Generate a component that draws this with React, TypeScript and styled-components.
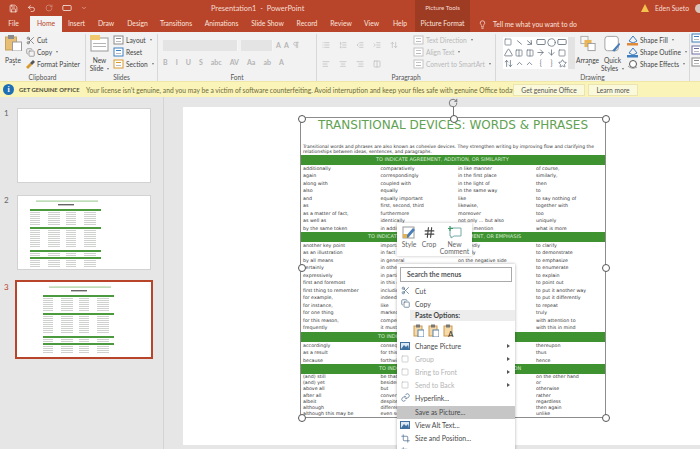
import React from "react";
import styled, { createGlobalStyle } from "styled-components";
import {
  AlignCenter, AlignLeft, AlignRight, ArrowDown, ArrowRight, ChevronDown, ChevronUp, Circle, Copy, IndentDecrease,
  IndentIncrease, Lightbulb, List, ListOrdered, Minus, Pilcrow, RectangleHorizontal, RotateCw, Save, Scissors, Square, Star,
  Triangle, Undo2, Columns2, ArrowUpDown, Link, Crop, Hash,
} from "lucide-react";

const UI = `"Lato", "Noto Sans", sans-serif`;
const RED = "#b8452a";
const DARK = "#9d3b23";

const Global = createGlobalStyle`
  html, body { margin: 0; padding: 0; background: #e6e6e6; }
  body { font-family: ${UI}; }
  #root { width: 700px; height: 449px; overflow: hidden; }
`;

const Page = styled.div`
  width: 700px;
  height: 449px;
  display: flex;
  flex-direction: column;
  overflow: hidden;
`;

/* title bar */
const TitleRow = styled.header`
  height: 16px;
  background: ${RED};
  display: flex;
  align-items: center;
  color: #f6dcd3;
  font-size: 7.4px;
`;
const Qat = styled.div`
  width: 211px;
  display: flex;
  align-items: center;
  gap: 9px;
  padding-left: 9px;
  box-sizing: border-box;
  color: #f7e5df;
`;
const DocTitle = styled.div`
  width: 204px;
  white-space: pre;
`;
const ToolsTag = styled.div`
  width: 55px;
  height: 100%;
  background: ${DARK};
  text-align: center;
  line-height: 16px;
  font-size: 6.2px;
`;
const User = styled.div`
  margin-left: auto;
  display: flex;
  align-items: center;
  gap: 6px;
  font-size: 6.8px;
`;
const Avatar = styled.span`
  width: 9px;
  height: 9px;
  border-radius: 50%;
  background: #d9c4bb;
  margin-right: -4px;
`;

/* tabs */
const TabRow = styled.nav`
  height: 16px;
  background: ${RED};
  display: flex;
  align-items: stretch;
  color: #f8e3dc;
  font-size: 6.8px;
`;
const Tab = styled.div<{ $w: number; $active?: boolean; $tool?: boolean }>`
  width: ${(p) => p.$w}px;
  text-align: center;
  line-height: 15px;
  white-space: nowrap;
  background: ${(p) => (p.$active ? "#f3f3f3" : p.$tool ? DARK : "transparent")};
  color: ${(p) => (p.$active ? RED : "inherit")};
`;
const TellMe = styled.div`
  display: flex;
  align-items: center;
  gap: 6px;
  margin-left: 8px;
`;

/* ribbon */
const Ribbon = styled.section`
  height: 49px;
  background: #f2f2f2;
  display: flex;
  color: #444;
  font-size: 6.6px;
`;
const Group = styled.div<{ $w: number }>`
  width: ${(p) => p.$w}px;
  flex: none;
  box-sizing: border-box;
  display: flex;
  flex-direction: column;
  border-right: 1px solid #d8d8d8;
  margin: 2px 0 0;
`;
const GroupBody = styled.div`
  flex: 1;
  display: flex;
  min-height: 0;
`;
const GroupLabel = styled.div`
  height: 8px;
  line-height: 8px;
  text-align: center;
  font-size: 6.6px;
  color: #555;
`;
const BigButton = styled.div<{ $w: number }>`
  width: ${(p) => p.$w}px;
  flex: none;
  display: flex;
  flex-direction: column;
  align-items: center;
  line-height: 8px;
  white-space: nowrap;
  padding-top: 1px;
  box-sizing: border-box;
`;
const BigIcon = styled.span`
  height: 19px;
  display: flex;
  align-items: flex-start;
  margin-bottom: 2px;
`;
const SmallStack = styled.div<{ $pad?: number }>`
  display: flex;
  flex-direction: column;
  justify-content: flex-start;
  padding-left: ${(p) => p.$pad ?? 0}px;
`;
const SmallButton = styled.div<{ $off?: boolean }>`
  height: 12.2px;
  display: flex;
  align-items: center;
  gap: 2px;
  white-space: nowrap;
  color: ${(p) => (p.$off ? "#b9b9b9" : "#444")};
`;
const Caret = styled.span`
  width: 0;
  height: 0;
  margin-left: 2px;
  border-left: 1.5px solid transparent;
  border-right: 1.5px solid transparent;
  border-top: 2px solid #777;
  display: inline-block;
  vertical-align: middle;
`;
const FontBox = styled.div`
  display: flex;
  flex-direction: column;
  gap: 5px;
  padding: 5px 0 0 5px;
  color: #b4b4b4;
`;
const FontRow = styled.div<{ $gap?: number }>`
  display: flex;
  align-items: center;
  gap: ${(p) => p.$gap ?? 6}px;
  height: 12px;
  font-size: 7px;
  font-weight: 700;
`;
const Combo = styled.div<{ $w: number }>`
  width: ${(p) => p.$w}px;
  height: 11px;
  background: #e4e4e4;
  border-right: 1px solid #f6f6f6;
`;
const ParaBox = styled.div`
  width: 96px;
  flex: none;
  display: flex;
  flex-direction: column;
  gap: 7px;
  padding: 5px 0 0 5px;
  box-sizing: border-box;
  color: #b9b9b9;
`;
const Gallery = styled.div`
  width: 72px;
  height: 32px;
  box-sizing: border-box;
  margin: 3px 0 0 7px;
  background: #fff;
  border-right: 7px solid #e3e3e3;
  flex: none;
  display: grid;
  grid-template-columns: repeat(6, 10.8px);
  grid-auto-rows: 10.6px;
  place-items: center;
  color: #5f6b77;
`;

/* notice */
const Notice = styled.aside`
  height: 16px;
  background: #faf4b8;
  border-top: 1px solid #eee7a8;
  box-sizing: border-box;
  display: flex;
  align-items: center;
  font-size: 6.7px;
  color: #6d6a3a;
  white-space: nowrap;
`;
const InfoDot = styled.span`
  width: 11px;
  height: 11px;
  border-radius: 50%;
  background: #1f6fb5;
  color: #fff;
  font: bold 8px/11px "Liberation Serif", serif;
  text-align: center;
  margin: 0 5px 0 3px;
  flex: none;
`;
const NoticeHead = styled.b`
  color: #4d4d38;
  width: 67px;
  flex: none;
  font-weight: 700;
  font-size: 5.9px;
`;
const NoticeBody = styled.span`
  width: 427px;
  flex: none;
`;
const NoticeButton = styled.span<{ $w: number }>`
  width: ${(p) => p.$w}px;
  height: 12px;
  line-height: 11px;
  margin-right: 3px;
  text-align: center;
  background: #fbf9dc;
  border: 1px solid #e9e4b0;
  box-sizing: border-box;
  color: #555;
`;

/* workspace */
const Workspace = styled.main`
  flex: 1;
  min-height: 0;
  position: relative;
  display: flex;
`;
const ThumbPane = styled.div`
  width: 164px;
  flex: none;
  box-sizing: border-box;
  border-right: 1px solid #d4d4d4;
  padding-top: 11px;
  display: flex;
  flex-direction: column;
  gap: 12px;
  background: #e6e6e6;
`;
const ThumbRow = styled.div<{ $current?: boolean }>`
  display: flex;
  align-items: flex-start;
  font-size: 8px;
  color: ${(p) => (p.$current ? RED : "#666")};
`;
const ThumbNum = styled.span`
  width: 17px;
  padding-left: 4px;
  box-sizing: border-box;
  flex: none;
`;
const Thumb = styled.div<{ $current?: boolean }>`
  width: 134px;
  height: 75px;
  background: #fff;
  box-sizing: border-box;
  border: 1px solid ${(p) => (p.$current ? "#fff" : "#d2d2d2")};
  ${(p) => p.$current && `outline: 2px solid ${RED};`}
  display: flex;
`;
const Canvas = styled.div`
  flex: 1;
  padding: 10px 0 4px 19px;
  display: flex;
  background: #e6e6e6;
  min-width: 0;
`;
const Slide = styled.div`
  flex: 1;
  background: #fff;
  padding: 10px 0 0 117px;
  position: relative;
`;
const Picture = styled.div`
  width: 306px;
  height: 301px;
  box-sizing: border-box;
  border: 1px solid #8c8c8c;
  position: relative;
  color: #333;
  font-family: "DejaVu Sans", sans-serif;
  font-size: 4.75px;
`;
const Handle = styled.span<{ $x: number; $y: number }>`
  position: absolute;
  left: ${(p) => p.$x}%;
  top: ${(p) => p.$y}%;
  width: 6px;
  height: 6px;
  margin: -3.5px 0 0 -3.5px;
  border: 1px solid #555;
  border-radius: 50%;
  background: #fff;
  z-index: 1;
`;
const RotateStem = styled.span`
  position: absolute;
  left: 50%;
  top: -11px;
  width: 1px;
  height: 11px;
  background: #777;
`;
const RotateIcon = styled.span`
  position: absolute;
  left: 50%;
  top: -20px;
  margin-left: -5px;
  color: #666;
  display: flex;
`;
const DocTitleText = styled.h1`
  margin: 0;
  height: 26px;
  text-align: center;
  font: 400 12px/14px "DejaVu Sans", sans-serif;
  color: #5fa252;
  white-space: nowrap;
`;
const Intro = styled.p`
  margin: 0;
  height: 11px;
  padding: 0 2px;
  font-size: 4.5px;
  line-height: 5px;
  white-space: nowrap;
`;
const Band = styled.div<{ $indent: number }>`
  height: 10px;
  background: #3e9230;
  color: #d7ecd2;
  font-size: 5px;
  line-height: 9.5px;
  padding-left: ${(p) => p.$indent}px;
  white-space: nowrap;
  overflow: hidden;
`;
const Rows = styled.div<{ $h: number }>`
  display: grid;
  grid-template-columns: 77.5px 77.5px 78px 1fr;
  grid-auto-rows: ${(p) => p.$h}px;
  line-height: ${(p) => p.$h}px;
  padding-left: 2px;
  white-space: nowrap;
`;

/* floating mini toolbar and menu */
const MiniBar = styled.div`
  position: absolute;
  left: 397px;
  top: 126px;
  width: 75px;
  height: 33px;
  background: #fff;
  box-shadow: 0 0 3px rgba(0, 0, 0, 0.25);
  display: flex;
  font-size: 6.8px;
  color: #666;
  z-index: 3;
`;
const MiniTool = styled.div<{ $w: number }>`
  width: ${(p) => p.$w}px;
  display: flex;
  flex-direction: column;
  align-items: center;
  line-height: 7px;
  padding-top: 3px;
  gap: 2px;
  text-align: center;
`;
const Menu = styled.div`
  position: absolute;
  left: 397px;
  top: 167px;
  width: 118px;
  height: 200px;
  background: #fff;
  box-shadow: 0 0 3px rgba(0, 0, 0, 0.3);
  z-index: 3;
  font-size: 6.9px;
  color: #444;
`;
const MenuSearch = styled.div`
  margin: 3px 3px 2px;
  height: 15px;
  border: 1px solid #aaa;
  box-sizing: border-box;
  padding-left: 6px;
  line-height: 13px;
  font-weight: 700;
  color: #555;
`;
const MenuItem = styled.div<{ $off?: boolean; $hot?: boolean }>`
  height: 13px;
  display: flex;
  align-items: center;
  gap: 5px;
  padding-left: 3px;
  white-space: nowrap;
  color: ${(p) => (p.$off ? "#b5b5b5" : "#4a4a4a")};
  background: ${(p) => (p.$hot ? "#c6c6c6" : "transparent")};
  margin-top: ${(p) => (p.$hot ? 1.5 : 0)}px;
`;
const MenuIcon = styled.span`
  width: 10px;
  display: flex;
  justify-content: center;
  color: #53718f;
  flex: none;
`;
const MenuHead = styled.div`
  margin: 0 0 0 13px;
  height: 11px;
  line-height: 11px;
  padding-left: 5px;
  font-weight: 700;
  background: #ededed;
`;
const PasteRow = styled.div`
  height: 17px;
  margin-top: 1px;
  display: flex;
  align-items: center;
  gap: 4px;
  padding-left: 16px;
`;
const Arrow = styled.span`
  margin-left: auto;
  margin-right: 5px;
  width: 0;
  height: 0;
  border-top: 2px solid transparent;
  border-bottom: 2px solid transparent;
  border-left: 3px solid #555;
`;

/* drawn icons */
const PasteIcon = () => (
  <svg width="17" height="16" viewBox="0 0 17 16">
    <rect x="0.5" y="2" width="11" height="13" fill="#e8bd74" stroke="#c79f5f" />
    <rect x="3" y="0" width="6" height="4" fill="#8b8b8b" />
    <rect x="7.5" y="7" width="9" height="9" fill="#fff" stroke="#9a9a9a" />
  </svg>
);
const NewSlideIcon = () => (
  <svg width="19" height="17" viewBox="0 0 19 17">
    <rect x="1" y="3" width="17" height="13" fill="#fff" stroke="#999" />
    <rect x="3" y="8" width="13" height="1" fill="#b5b5b5" />
    <rect x="3" y="11" width="13" height="1" fill="#b5b5b5" />
    <rect x="0" y="0" width="10" height="5" fill="#f0c96f" />
  </svg>
);
const TinySlide = ({ tone }: { tone: string }) => (
  <svg width="11" height="10" viewBox="0 0 11 10">
    <rect x="1" y="1" width="9" height="8" fill="#fff" stroke={tone} />
    <rect x="3" y="3" width="5" height="1" fill={tone} />
    <rect x="3" y="6" width="5" height="1" fill="#bbb" />
  </svg>
);
const Painter = () => (
  <svg width="9" height="9" viewBox="0 0 9 9">
    <path d="M0 7 L4 3 L6 5 L2 9 Z" fill="#d89a2e" />
    <path d="M4 3 L7 0 L9 2 L6 5 Z" fill="#555" />
  </svg>
);
const ArrangeIcon = () => (
  <svg width="16" height="17" viewBox="0 0 18 18">
    <rect x="1" y="1" width="8" height="8" fill="#f6f6f6" stroke="#aaa" />
    <rect x="5" y="5" width="8" height="8" fill="#eab557" />
    <rect x="9" y="9" width="8" height="8" fill="#fff" stroke="#999" />
  </svg>
);
const QuickIcon = () => (
  <svg width="17" height="18" viewBox="0 0 19 19">
    <rect x="1" y="1" width="15" height="16" rx="3" fill="#fff" stroke="#999" />
    <path d="M9 17 L17 8 L18 10 L12 18 Z" fill="#4a7eb8" />
  </svg>
);
const FillIcon = ({ bar, tone }: { bar: string; tone: string }) => (
  <svg width="11" height="11" viewBox="0 0 11 11">
    <path d="M2 6 L6 1 L10 6 L6 8 Z" fill="none" stroke={tone} />
    <rect x="0" y="8" width="11" height="2.5" fill={bar} />
  </svg>
);
const EffectIcon = () => (
  <svg width="11" height="11" viewBox="0 0 11 11">
    <circle cx="6" cy="5" r="3.5" fill="#fff" stroke="#555" />
    <path d="M1 7 Q5 11 10 8" fill="none" stroke="#999" />
  </svg>
);
const ClipIcon = ({ tone, mark, letter }: { tone: string; mark: string; letter?: string }) => (
  <svg width="11" height="13" viewBox="0 0 11 13">
    <rect x="1" y="2" width="8" height="10" fill="#f5d9a8" stroke={tone} />
    <rect x="3" y="0.5" width="4" height="3" fill="#777" />
    {letter ? (
      <text x="5" y="12.5" fontSize="8" fontFamily="Lato" fill="#333">{letter}</text>
    ) : (
      <rect x="5" y="6" width="6" height="7" fill="#fff" stroke={mark} />
    )}
  </svg>
);
const PictureIcon = () => (
  <svg width="10" height="10" viewBox="0 0 10 10">
    <rect x="0.5" y="1.5" width="9" height="7" fill="#dce8f4" stroke="#3f6f9f" />
    <path d="M1 8 L4 4 L6 6 L8 4 L9 8 Z" fill="#3f6f9f" />
  </svg>
);
const StyleIcon = () => (
  <svg width="14" height="13" viewBox="0 0 14 13">
    <rect x="1" y="1" width="11" height="11" fill="#fff" stroke="#999" />
    <path d="M3 11 L11 2 L13 4 L6 12 Z" fill="#4a7eb8" />
    <rect x="1" y="8" width="4" height="4" fill="#e8b04b" />
  </svg>
);
const CommentIcon = () => (
  <svg width="14" height="13" viewBox="0 0 14 13">
    <path d="M2 2 H13 V10 H6 L3 12 V10 H2 Z" fill="#fff" stroke="#7aa" />
    <path d="M2 0 V5 M0 2.5 H5" stroke="#3b9a62" strokeWidth="1.2" />
  </svg>
);

// little picture of the slide, used in the thumbnails
const MiniDoc = ({ left, top }: { left: number; top: number }) => {
  const bands = [13, 31, 54, 61];
  const rows = [
    [16, 18, 20, 22, 24, 26, 28],
    [34, 36, 38, 40, 42, 44, 46, 48, 50],
    [57, 59],
    [64, 66, 68, 70],
  ].flat();
  return (
    <svg width="132" height="73" viewBox="0 0 132 73">
      <g transform={`translate(${left} ${top})`}>
        <rect x="18" y="4.5" width="62" height="1.2" fill="#a5cf9c" />
        <rect x="40" y="8" width="16" height="1.4" fill="#666" />
        {bands.map((y) => (
          <rect key={y} x="12" y={y} width="71" height="2" fill="#4c9a3e" />
        ))}
        {rows.map((y) =>
          [12, 30, 48, 66].map((x, i) => (
            <rect key={x + "-" + y} x={x} y={y} width={i % 2 ? 12 : 10} height="0.8" fill="#c2c6c2" />
          )),
        )}
      </g>
    </svg>
  );
};

const GALLERY = [
  <Square size={8} />, <Minus size={9} style={{ transform: "rotate(40deg)" }} />, <ArrowRight size={9} style={{ transform: "rotate(40deg)" }} />,
  <RectangleHorizontal size={10} />, <Circle size={9} />, <RectangleHorizontal size={10} />,
  <Triangle size={9} />, <Columns2 size={8} />, <Columns2 size={8} />,
  <ArrowRight size={9} />, <ArrowDown size={9} />, <Square size={8} />,
  <ArrowUpDown size={9} />, <ChevronUp size={9} />, <ChevronUp size={9} />,
  <span>{"{"}</span>, <span>{"}"}</span>, <Star size={9} />,
];

const SECTIONS = [
  {
    title: "TO INDICATE AGREEMENT, ADDITION, OR SIMILARITY",
    indent: 75,
    h: 7.45,
    rows: [
      ["additionally", "comparatively", "in like manner", "of course,"],
      ["again", "correspondingly", "in the first place", "similarly,"],
      ["along with", "coupled with", "in the light of", "then"],
      ["also", "equally", "in the same way", "to"],
      ["and", "equally important", "like", "to say nothing of"],
      ["as", "first, second, third", "likewise,", "together with"],
      ["as a matter of fact,", "furthermore", "moreover", "too"],
      ["as well as", "identically", "not only ... but also", "uniquely"],
      ["by the same token", "in addition", "not to mention", "what is more"],
    ],
  },
  {
    title: "TO INDICATE EXAMPLE, SUPPORT, STATEMENT, OR EMPHASIS",
    indent: 67,
    h: 7.5,
    rows: [
      ["another key point", "important to realize", "markedly", "to clarify"],
      ["as an illustration", "in fact", "namely", "to demonstrate"],
      ["by all means", "in general", "on the negative side", "to emphasize"],
      ["certainly", "in other words", "on the positive side", "to enumerate"],
      ["expressively", "in particular", "particularly", "to explain"],
      ["first and foremost", "in this case", "significantly", "to point out"],
      ["first thing to remember", "including", "specifically", "to put it another way"],
      ["for example,", "indeed", "surprisingly", "to put it differently"],
      ["for instance,", "like", "that is to say", "to repeat"],
      ["for one thing", "markedly", "the most compelling", "truly"],
      ["for this reason,", "compelling", "to be sure", "with attention to"],
      ["frequently", "it must be noted", "to begin with", "with this in mind"],
    ],
  },
  {
    title: "TO INDICATE RESULT, CONSEQUENCE, OR PURPOSE",
    indent: 77,
    h: 7.4,
    rows: [
      ["accordingly", "consequently", "so", "thereupon"],
      ["as a result", "for this reason", "therefore", "thus"],
      ["because", "forthwith", "under those", "hence"],
    ],
  },
  {
    title: "TO INDICATE QUALIFICATION, CONTRAST, OR LIMITATION",
    indent: 78,
    h: 6.2,
    rows: [
      ["(and) still", "be that as it may", "however", "on the other hand"],
      ["(and) yet", "besides", "in contrast", "or"],
      ["above all", "but", "instead", "otherwise"],
      ["after all", "conversely", "nevertheless", "rather"],
      ["albeit", "despite", "nonetheless", "regardless"],
      ["although", "different from", "notwithstanding", "then again"],
      ["although this may be", "even so", "on the contrary", "unlike"],
    ],
  },
];

const App = () => {
  return (
    <Page>
      <Global />
      <TitleRow>
        <Qat>
          <Save size={9} />
          <Undo2 size={9} />
          <RotateCw size={8} opacity={0.5} />
          <RectangleHorizontal size={10} />
          <ChevronDown size={6} />
        </Qat>
        <DocTitle>Presentation1  -  PowerPoint</DocTitle>
        <ToolsTag>Picture Tools</ToolsTag>
        <User>
          <svg width="8" height="8" viewBox="0 0 8 8">
            <path d="M4 0 L8 8 H0 Z" fill="#f2c14e" />
          </svg>
          Eden Sueto
          <Avatar />
        </User>
      </TitleRow>
      <TabRow>
        <Tab $w={27}>File</Tab>
        <Tab $w={3} />
        <Tab $w={32} $active>Home</Tab>
        <Tab $w={29}>Insert</Tab>
        <Tab $w={30}>Draw</Tab>
        <Tab $w={33}>Design</Tab>
        <Tab $w={44}>Transitions</Tab>
        <Tab $w={47}>Animations</Tab>
        <Tab $w={45}>Slide Show</Tab>
        <Tab $w={34}>Record</Tab>
        <Tab $w={34}>Review</Tab>
        <Tab $w={27}>View</Tab>
        <Tab $w={30}>Help</Tab>
        <Tab $w={55} $tool>Picture Format</Tab>
        <TellMe>
          <Lightbulb size={9} />
          Tell me what you want to do
        </TellMe>
      </TabRow>

      <Ribbon>
        <Group $w={86}>
          <GroupBody>
            <BigButton $w={26}>
              <BigIcon><PasteIcon /></BigIcon>
              Paste
              <Caret />
            </BigButton>
            <SmallStack>
              <SmallButton><Scissors size={9} color="#666" /> Cut</SmallButton>
              <SmallButton><Copy size={9} color="#888" /> Copy <Caret /></SmallButton>
              <SmallButton><Painter /> Format Painter</SmallButton>
            </SmallStack>
          </GroupBody>
          <GroupLabel>Clipboard</GroupLabel>
        </Group>
        <Group $w={72}>
          <GroupBody>
            <BigButton $w={27}>
              <BigIcon><NewSlideIcon /></BigIcon>
              New
              <span>Slide <Caret /></span>
            </BigButton>
            <SmallStack>
              <SmallButton><TinySlide tone="#8a8a8a" /> Layout <Caret /></SmallButton>
              <SmallButton><TinySlide tone="#3f7fbf" /> Reset</SmallButton>
              <SmallButton><TinySlide tone="#d89a2e" /> Section <Caret /></SmallButton>
            </SmallStack>
          </GroupBody>
          <GroupLabel>Slides</GroupLabel>
        </Group>
        <Group $w={159}>
          <GroupBody>
            <FontBox>
              <FontRow $gap={3}>
                <Combo $w={74} />
                <Combo $w={31} />
                <span>A</span>
                <span>A</span>
                <Pilcrow size={8} />
              </FontRow>
              <FontRow $gap={8}>
                <span>B</span><span>I</span><span>U</span><span>S</span><span>abc</span><span>AV</span><span>Aa</span><span>ab</span><span>A</span>
              </FontRow>
            </FontBox>
          </GroupBody>
          <GroupLabel>Font</GroupLabel>
        </Group>
        <Group $w={179}>
          <GroupBody>
            <ParaBox>
              <FontRow $gap={9}>
                <List size={8} /><ListOrdered size={8} /><IndentDecrease size={8} /><IndentIncrease size={8} /><ArrowUpDown size={8} />
              </FontRow>
              <FontRow $gap={9}>
                <AlignLeft size={8} /><AlignCenter size={8} /><AlignRight size={8} /><Columns2 size={8} />
              </FontRow>
            </ParaBox>
            <SmallStack>
              <SmallButton $off><TinySlide tone="#c4c4c4" /> Text Direction <Caret /></SmallButton>
              <SmallButton $off><TinySlide tone="#c4c4c4" /> Align Text <Caret /></SmallButton>
              <SmallButton $off><TinySlide tone="#c4c4c4" /> Convert to SmartArt <Caret /></SmallButton>
            </SmallStack>
          </GroupBody>
          <GroupLabel>Paragraph</GroupLabel>
        </Group>
        <Group $w={194}>
          <GroupBody>
            <Gallery>
              {GALLERY.map((g, i) => (
                <React.Fragment key={i}>{g}</React.Fragment>
              ))}
            </Gallery>
            <BigButton $w={25}>
              <BigIcon><ArrangeIcon /></BigIcon>
              Arrange
              <Caret />
            </BigButton>
            <BigButton $w={25}>
              <BigIcon><QuickIcon /></BigIcon>
              Quick
              <span>Styles <Caret /></span>
            </BigButton>
            <SmallStack $pad={2}>
              <SmallButton><FillIcon bar="#e08a3c" tone="#3f7fbf" /> Shape Fill <Caret /></SmallButton>
              <SmallButton><FillIcon bar="#3f7fbf" tone="#3f7fbf" /> Shape Outline <Caret /></SmallButton>
              <SmallButton><EffectIcon /> Shape Effects <Caret /></SmallButton>
            </SmallStack>
          </GroupBody>
          <GroupLabel>Drawing</GroupLabel>
        </Group>
        <SmallStack $pad={1}>
          <SmallButton><TinySlide tone="#3f7fbf" /></SmallButton>
          <SmallButton><TinySlide tone="#6f6fa8" /></SmallButton>
          <SmallButton><TinySlide tone="#888" /></SmallButton>
        </SmallStack>
      </Ribbon>

      <Notice>
        <InfoDot>i</InfoDot>
        <NoticeHead>GET GENUINE OFFICE</NoticeHead>
        <NoticeBody>Your license isn't genuine, and you may be a victim of software counterfeiting. Avoid interruption and keep your files safe with genuine Office today.</NoticeBody>
        <NoticeButton $w={72}>Get genuine Office</NoticeButton>
        <NoticeButton $w={50}>Learn more</NoticeButton>
      </Notice>

      <Workspace>
        <ThumbPane>
          <ThumbRow>
            <ThumbNum>1</ThumbNum>
            <Thumb />
          </ThumbRow>
          <ThumbRow>
            <ThumbNum>2</ThumbNum>
            <Thumb><MiniDoc left={0} top={0} /></Thumb>
          </ThumbRow>
          <ThumbRow $current>
            <ThumbNum>3</ThumbNum>
            <Thumb $current><MiniDoc left={13} top={-1} /></Thumb>
          </ThumbRow>
        </ThumbPane>
        <Canvas>
          <Slide>
            <Picture>
              <RotateStem />
              <RotateIcon><RotateCw size={10} /></RotateIcon>
              <Handle $x={0} $y={0} />
              <Handle $x={50} $y={0} />
              <Handle $x={100} $y={0} />
              <Handle $x={0} $y={50} />
              <Handle $x={100} $y={50} />
              <Handle $x={0} $y={100} />
              <Handle $x={50} $y={100} />
              <Handle $x={100} $y={100} />
              <DocTitleText>TRANSITIONAL DEVICES: WORDS &amp; PHRASES</DocTitleText>
              <Intro>
                Transitional words and phrases are also known as cohesive devices. They strengthen writing by improving flow and clarifying the
                <br />
                relationships between ideas, sentences, and paragraphs.
              </Intro>
              {SECTIONS.map((s) => (
                <React.Fragment key={s.title}>
                  <Band $indent={s.indent}>{s.title}</Band>
                  <Rows $h={s.h}>
                    {s.rows.flat().map((c, i) => (
                      <span key={i}>{c}</span>
                    ))}
                  </Rows>
                </React.Fragment>
              ))}
            </Picture>
          </Slide>
        </Canvas>

        <MiniBar>
          <MiniTool $w={24}><StyleIcon /> Style</MiniTool>
          <MiniTool $w={16}><Hash size={13} color="#444" /> Crop</MiniTool>
          <MiniTool $w={35}><CommentIcon /> New Comment</MiniTool>
        </MiniBar>
        <Menu>
          <MenuSearch>Search the menus</MenuSearch>
          <MenuItem><MenuIcon><Scissors size={9} /></MenuIcon> Cut</MenuItem>
          <MenuItem><MenuIcon><Copy size={9} /></MenuIcon> Copy</MenuItem>
          <MenuHead>Paste Options:</MenuHead>
          <PasteRow>
            <ClipIcon tone="#c99a4e" mark="#5580aa" />
            <ClipIcon tone="#c99a4e" mark="#5580aa" />
            <ClipIcon tone="#c99a4e" mark="#444" letter="A" />
          </PasteRow>
          <MenuItem><MenuIcon><PictureIcon /></MenuIcon> Change Picture <Arrow /></MenuItem>
          <MenuItem $off><MenuIcon><Square size={8} color="#bbb" /></MenuIcon> Group <Arrow /></MenuItem>
          <MenuItem $off><MenuIcon><Square size={8} color="#bbb" /></MenuIcon> Bring to Front <Arrow /></MenuItem>
          <MenuItem $off><MenuIcon><Square size={8} color="#bbb" /></MenuIcon> Send to Back <Arrow /></MenuItem>
          <MenuItem><MenuIcon><Link size={9} /></MenuIcon> Hyperlink...</MenuItem>
          <MenuItem $hot><MenuIcon /> Save as Picture...</MenuItem>
          <MenuItem><MenuIcon><PictureIcon /></MenuIcon> View Alt Text...</MenuItem>
          <MenuItem><MenuIcon><Crop size={9} /></MenuIcon> Size and Position...</MenuItem>
          <MenuItem><MenuIcon><Crop size={9} /></MenuIcon></MenuItem>
        </Menu>
      </Workspace>
    </Page>
  );
};

export default App;
